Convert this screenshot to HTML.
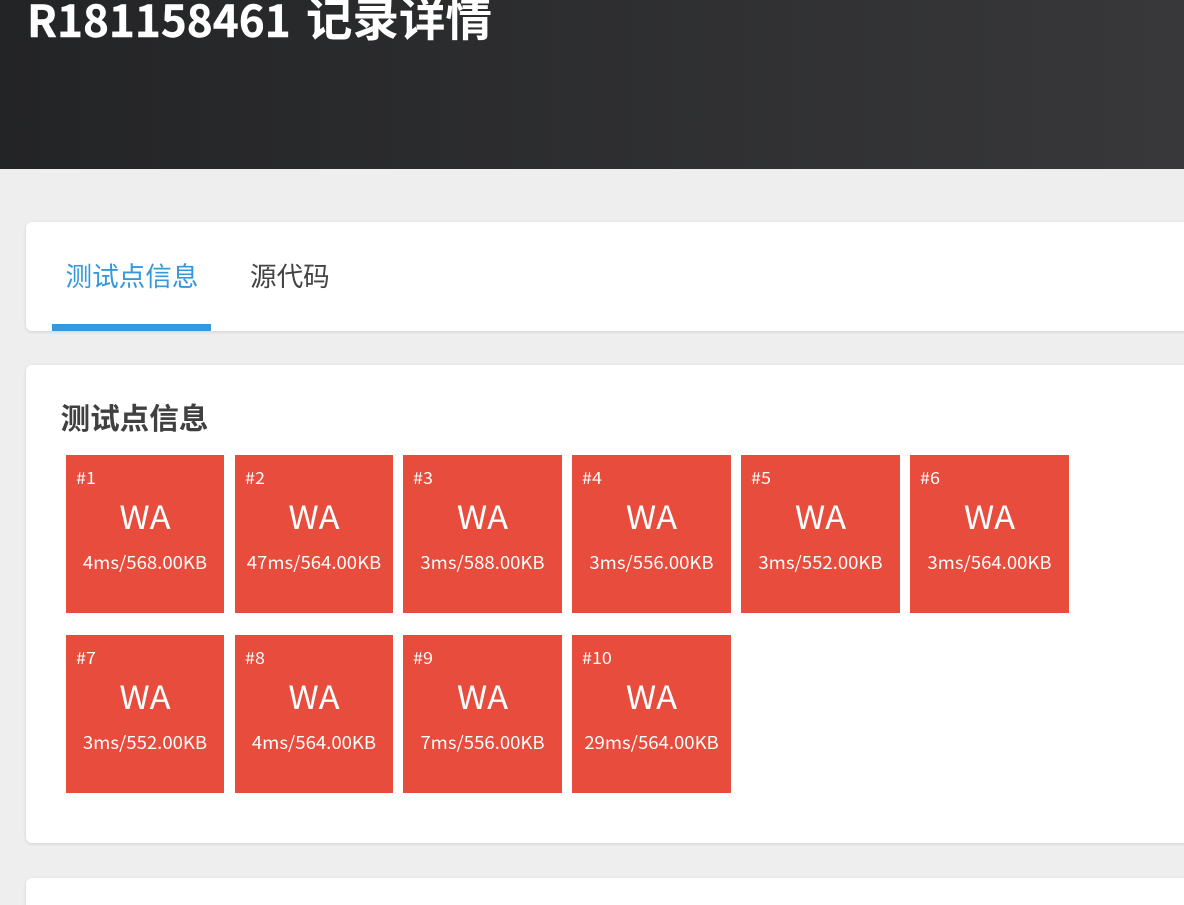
<!DOCTYPE html>
<html lang="zh"><head><meta charset="utf-8"><title>R181158461 记录详情</title>
<style>
html,body{margin:0;padding:0;background:#eee;width:1184px;height:905px;overflow:hidden}
body{position:relative;font-family:"Noto Sans CJK SC","Liberation Sans",sans-serif;color:#444}
.a{position:absolute;white-space:nowrap}
#hd{left:0;top:0;width:1184px;height:169px;background:linear-gradient(90deg,#232426,#38383a)}
#tt{left:27px;top:-15px;font-size:44px;line-height:66px;font-weight:700;color:#fff;-webkit-text-stroke:.4px #fff}
#tc{left:306px;top:-16px;font-size:46.5px;line-height:66px;font-weight:700;color:#fff}
.card{position:absolute;background:#fff;border-radius:6px;left:26px;width:1170px;box-shadow:0 1px 3px rgba(0,0,0,.12)}
.tile{position:absolute;height:158px;background:#e74c3c;color:#fff;text-align:center}
.tile .n{position:absolute;left:9.5px;top:11px;font-size:16px;line-height:22px;transform:scaleX(1.12);transform-origin:0 0}
.tile .s{position:absolute;left:0;right:0;top:39px;font-size:32px;line-height:44px;transform:scaleX(1.08)}
.tile .d{position:absolute;left:-5px;right:-5px;top:96px;font-size:17.5px;line-height:24px;transform:scaleX(1.06)}
.w{width:158px}.x{width:159px}
</style></head><body>
<div class="a" id="hd"></div>
<div class="a" id="tt">R181158461</div>
<div class="a" id="tc">记录详情</div>
<div class="card" style="top:222px;height:109px"></div>
<div class="a" style="left:65.5px;top:257px;font-size:26.6px;line-height:36px;color:#3498db">测试点信息</div>
<div class="a" style="left:250px;top:257px;font-size:26.6px;line-height:36px">源代码</div>
<div class="a" style="left:52px;top:324px;width:159px;height:7px;background:#3498db"></div>
<div class="card" style="top:365px;height:478px"></div>
<div class="a" style="left:60.5px;top:397px;font-size:29.6px;line-height:40px;font-weight:700;color:#404040">测试点信息</div>
<div class="tile w" style="left:66px;top:455px"><div class="n">#1</div><div class="s">WA</div><div class="d">4ms/568.00KB</div></div>
<div class="tile w" style="left:235px;top:455px"><div class="n">#2</div><div class="s">WA</div><div class="d">47ms/564.00KB</div></div>
<div class="tile x" style="left:403px;top:455px"><div class="n">#3</div><div class="s">WA</div><div class="d">3ms/588.00KB</div></div>
<div class="tile x" style="left:572px;top:455px"><div class="n">#4</div><div class="s">WA</div><div class="d">3ms/556.00KB</div></div>
<div class="tile x" style="left:741px;top:455px"><div class="n">#5</div><div class="s">WA</div><div class="d">3ms/552.00KB</div></div>
<div class="tile x" style="left:910px;top:455px"><div class="n">#6</div><div class="s">WA</div><div class="d">3ms/564.00KB</div></div>
<div class="tile w" style="left:66px;top:635px"><div class="n">#7</div><div class="s">WA</div><div class="d">3ms/552.00KB</div></div>
<div class="tile w" style="left:235px;top:635px"><div class="n">#8</div><div class="s">WA</div><div class="d">4ms/564.00KB</div></div>
<div class="tile x" style="left:403px;top:635px"><div class="n">#9</div><div class="s">WA</div><div class="d">7ms/556.00KB</div></div>
<div class="tile x" style="left:572px;top:635px"><div class="n">#10</div><div class="s">WA</div><div class="d">29ms/564.00KB</div></div>
<div class="card" style="top:878px;height:60px"></div>
</body></html>
